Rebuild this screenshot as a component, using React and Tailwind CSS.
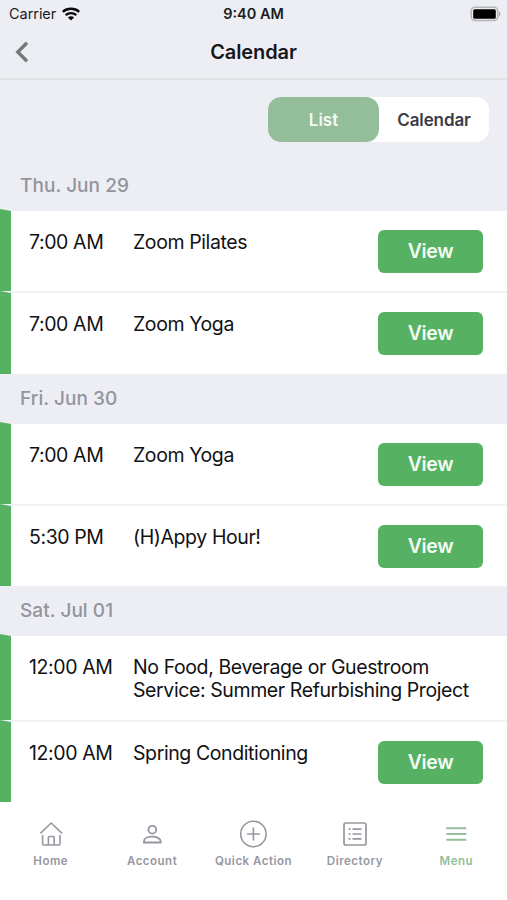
const days = [
  {
    label: "Thu. Jun 29",
    headerClass: "h-[49px] pt-[3px]",
    events: [
      { time: "7:00 AM", title: "Zoom Pilates", view: true, rowClass: "h-[82px]" },
      { time: "7:00 AM", title: "Zoom Yoga", view: true, rowClass: "h-[83px]" },
    ],
  },
  {
    label: "Fri. Jun 30",
    headerClass: "h-12 pt-[2px]",
    events: [
      { time: "7:00 AM", title: "Zoom Yoga", view: true, rowClass: "h-[82px]" },
      { time: "5:30 PM", title: "(H)Appy Hour!", view: true, rowClass: "h-[82px]" },
    ],
  },
  {
    label: "Sat. Jul 01",
    headerClass: "h-12 pt-[2px]",
    events: [
      {
        time: "12:00 AM",
        title: "No Food, Beverage or Guestroom Service: Summer Refurbishing Project",
        view: false,
        rowClass: "h-[86px] pr-6",
      },
      { time: "12:00 AM", title: "Spring Conditioning", view: true, rowClass: "h-[82px]" },
    ],
  },
];

function WifiIcon() {
  return (
    <svg width="18" height="14" viewBox="0 0 18 14" fill="none" stroke="#0b0b0d" strokeWidth="2.4">
      <path d="M.8 4.8C5.2.8 12.8.8 17.2 4.8" />
      <path d="M3.7 8.1c3-2.7 7.6-2.7 10.6 0" />
      <path d="M9 13.6 5.9 10.5c1.8-1.6 4.4-1.6 6.2 0Z" fill="#0b0b0d" stroke="none" />
    </svg>
  );
}

function BatteryIcon() {
  return (
    <svg width="32" height="16" viewBox="0 0 32 16">
      <rect x="1.2" y="1.2" width="26.6" height="13.4" rx="4" fill="#edeef3" stroke="#b4b5b9" strokeWidth="1.5" />
      <rect x="3.2" y="3.2" width="22.6" height="9.6" rx="1.5" fill="#000" />
      <path d="M29 5.6c1.8.5 1.8 4.3 0 4.8Z" fill="#a5a6aa" />
    </svg>
  );
}

function StatusBar() {
  return (
    <div className="grid h-[27px] grid-cols-3 items-center text-[14.5px] leading-none text-[#1c1c1e]">
      <div className="flex items-center gap-[6px] pt-px pl-[9px]">
        <span className="tracking-[-0.05px]">Carrier</span>
        <WifiIcon />
      </div>
      <div className="pt-px text-center font-semibold">9:40 AM</div>
      <div className="flex justify-end pr-[5px]">
        <BatteryIcon />
      </div>
    </div>
  );
}

function Header() {
  return (
    <div className="grid h-[53px] grid-cols-3 items-center border-b-2 border-[#e1e2e5] pb-px">
      <button className="pl-[15px]">
        <svg width="14" height="22" viewBox="0 0 14 22" fill="none" stroke="#77787b" strokeWidth="3.4">
          <path d="M12 1.8 2.8 11 12 20.2" />
        </svg>
      </button>
      <h1 className="text-center text-[20px] font-semibold tracking-[-0.1px] text-[#17171a]">Calendar</h1>
    </div>
  );
}

function EventRow({ event }) {
  return (
    <div
      className={`flex border-t-2 border-l-[11px] border-t-[#f1f1f3] border-l-[#56b262] bg-white pl-[18px] text-[19.5px] leading-[23px] tracking-[-0.4px] first:border-t-[#edeef3] ${event.rowClass}`}
    >
      <div className="w-[104px] shrink-0 pt-5">{event.time}</div>
      <div className="min-w-0 flex-1 pt-5">{event.title}</div>
      {event.view ? (
        <button className="mt-[19px] mr-6 h-[43px] w-[105px] rounded-[6px] bg-[#56b262] font-semibold tracking-[-0.3px] text-[#f4fbf4]">
          View
        </button>
      ) : null}
    </div>
  );
}

function HomeIcon() {
  return (
    <svg width="26" height="28" viewBox="0 0 26 28" fill="none" stroke="currentColor" strokeWidth="1.6">
      <path d="M2.4 13.3 13.2 3l10.8 10.3" />
      <path d="M4.6 15v8.8q0 1.2 1.2 1.2h15q1.2 0 1.2-1.2V15" />
      <path d="M10.4 25v-7.500q0-1 1-1h3.800q1 0 1 1V25" />
    </svg>
  );
}

function AccountIcon() {
  return (
    <svg width="26" height="28" viewBox="0 0 26 28" fill="none" stroke="currentColor" strokeWidth="1.8">
      <circle cx="13.3" cy="9.7" r="3.9" />
      <path d="M5 22.5v-1.3c0-6 16.6-6 16.6 0v1.3Z" />
    </svg>
  );
}

function QuickActionIcon() {
  return (
    <svg width="28" height="28" viewBox="0 0 28 28" fill="none" stroke="currentColor" strokeWidth="1.6">
      <circle cx="14.4" cy="14" r="12.7" />
      <path d="M14.4 7.6v12.8M8 14h12.8" />
    </svg>
  );
}

function DirectoryIcon() {
  return (
    <svg width="26" height="28" viewBox="0 0 26 28" fill="none" stroke="currentColor" strokeWidth="1.7">
      <rect x="2" y="3" width="22" height="22" rx="1.8" />
      <path d="M6.5 9.2h2M6.5 14h2M6.5 18.9h2M10.5 9.2h9M10.5 14h9M10.5 18.9h9" />
    </svg>
  );
}

function MenuIcon() {
  return (
    <svg width="26" height="28" viewBox="0 0 26 28" fill="none" stroke="currentColor" strokeWidth="2">
      <path d="M3.3 8.3h20M3.3 14h20M3.3 19.7h20" />
    </svg>
  );
}

const tabs = [
  { label: "Home", Icon: HomeIcon },
  { label: "Account", Icon: AccountIcon },
  { label: "Quick Action", Icon: QuickActionIcon },
  { label: "Directory", Icon: DirectoryIcon },
  { label: "Menu", Icon: MenuIcon, active: true },
];

function TabBar() {
  return (
    <nav className="grid flex-1 grid-cols-5 items-start bg-white pt-[18px]">
      {tabs.map(({ label, Icon, active }) => (
        <button
          key={label}
          className={`flex flex-col items-center gap-[5px] ${active ? "text-[#93bd9b]" : "text-[#96979f]"}`}
        >
          <Icon />
          <span className="text-[11.5px] leading-4 font-semibold tracking-[0.5px] whitespace-nowrap">{label}</span>
        </button>
      ))}
    </nav>
  );
}

export default function App() {
  return (
    <div className="flex h-[900px] w-[507px] flex-col overflow-hidden bg-[#edeef3] font-['Inter','Liberation_Sans',sans-serif] text-[#111113]">
      <StatusBar />
      <Header />
      <div className="flex h-20 justify-end pt-[17px] pr-[18px]">
        <div className="flex h-[45px] w-[221px] rounded-[13px] bg-white text-[17px] font-semibold">
          <button className="w-[111px] rounded-[13px] bg-[#94bd9a] pt-[2px] text-[#f2fbf2]">List</button>
          <button className="flex-1 pt-[2px] tracking-[-0.1px] text-[#3b3c47]">Calendar</button>
        </div>
      </div>
      {days.map((day) => (
        <section key={day.label}>
          <h2
            className={`flex items-center pl-5 text-[19px] font-medium tracking-[0.05px] text-[#93949d] ${day.headerClass}`}
          >
            {day.label}
          </h2>
          <div>
            {day.events.map((event, i) => (
              <EventRow key={i} event={event} />
            ))}
          </div>
        </section>
      ))}
      <TabBar />
    </div>
  );
}
